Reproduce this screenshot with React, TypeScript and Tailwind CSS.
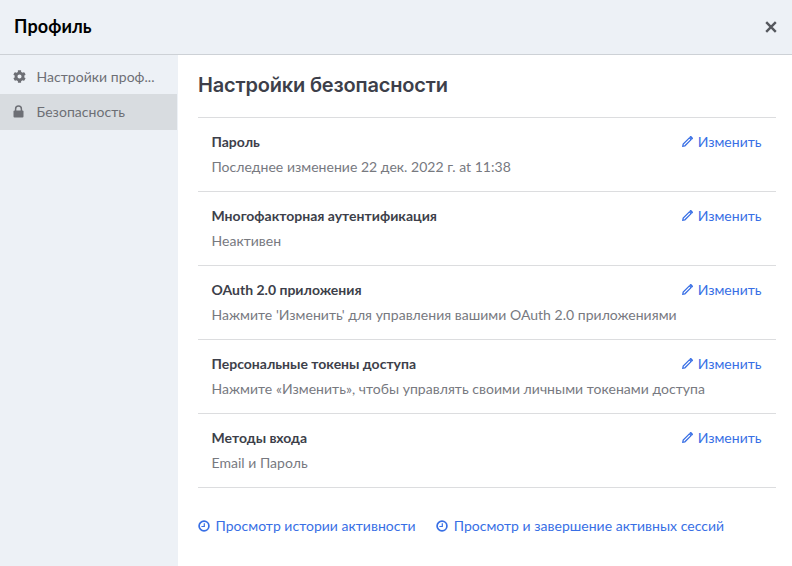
import { FaCog } from "react-icons/fa";

const rows = [
    { title: "Пароль", desc: "Последнее изменение 22 дек. 2022 г. at 11:38" },
    { title: "Многофакторная аутентификация", desc: "Неактивен" },
    { title: "OAuth 2.0 приложения", desc: "Нажмите 'Изменить' для управления вашими OAuth 2.0 приложениями" },
    { title: "Персональные токены доступа", desc: "Нажмите «Изменить», чтобы управлять своими личными токенами доступа" },
    { title: "Методы входа", desc: "Email и Пароль" },
];

function ClockIcon() {
    return (
        <svg width="12" height="12" viewBox="0 0 12 12" fill="none" stroke="currentColor" className="shrink-0">
            <circle cx="6" cy="6" r="4.9" strokeWidth="1.7" />
            <path d="M6.3 3.2V6.5H3.4" strokeWidth="1.2" />
        </svg>
    );
}

function PencilIcon() {
    return (
        <svg width="11" height="11" viewBox="0 0 11 11" fill="none" stroke="currentColor" strokeWidth="1.3" className="shrink-0">
            <path d="M7.4 1.9 1.2 8.1.8 10.2 2.9 9.8 9.1 3.6Z" />
            <path d="M8 1.3 8.8.6 10.4 2.2 9.7 3" fill="currentColor" />
        </svg>
    );
}

function LockIcon() {
    return (
        <svg width="11" height="13" viewBox="0 0 11 13" className="shrink-0">
            <path d="M2.6 6V4a2.9 2.9 0 0 1 5.8 0v2" fill="none" stroke="currentColor" strokeWidth="1.5" />
            <rect x="0.5" y="5.6" width="10" height="7" rx="1" fill="currentColor" />
        </svg>
    );
}

export default function App() {
    return (
        <div className="w-[792px] h-[566px] flex flex-col overflow-hidden bg-white font-['Lato','Noto_Sans',sans-serif]">
            {/* Header */}
            <div className="h-[55px] shrink-0 flex items-center justify-between pl-[14px] pr-[15px] pb-[1px] bg-[#edf1f6] border-b border-[#cdd1d6]">
                <h1 className="text-[18px] font-bold text-black tracking-[0.1px]">Профиль</h1>
                <svg width="12" height="12" viewBox="0 0 12 12" stroke="#55585e" strokeWidth="2.4">
                    <path d="M1.2 1.2 10.8 10.8M10.8 1.2 1.2 10.8" />
                </svg>
            </div>

            <div className="flex flex-1 min-h-0">
                {/* Sidebar */}
                <aside className="w-[178px] shrink-0 pt-1 bg-[#edf1f6] text-[14px] text-[#6d6f75] tracking-[0.04px]">
                    <div className="h-[35px] flex items-center gap-[10.5px] pl-[13px] pb-[1px]">
                        <FaCog size={13} className="shrink-0" />
                        <span className="whitespace-nowrap">Настройки проф...</span>
                    </div>
                    <div className="h-[36px] w-[177px] flex items-center gap-[12.5px] pl-[13px] pb-[1px] bg-[#d8dce0]">
                        <LockIcon />
                        <span>Безопасность</span>
                    </div>
                </aside>

                {/* Main */}
                <main className="flex-1 min-w-0 pl-5 pr-4">
                    <h2 className="h-[62px] pt-[16px] text-[20px] leading-[28px] font-semibold text-[#3d3f4a] font-['Inter',sans-serif] tracking-[-0.18px]">Настройки безопасности</h2>
                    <div className="border-t border-[#dcdddf]">
                        {rows.map((row) => (
                            <div key={row.title} className="h-[74px] px-[14px] pt-[14px] border-b border-[#dcdddf]">
                                <div className="flex justify-between items-center h-[18px]">
                                    <span className="text-[14px] font-bold text-[#3d3f4a] -ml-[0.5px]">{row.title}</span>
                                    <a className="flex items-center gap-[5px] text-[14px] text-[#386fe5] mr-[0.5px]">
                                        <PencilIcon />
                                        Изменить
                                    </a>
                                </div>
                                <p className="mt-[8px] text-[14px] leading-[18px] text-[#77797f] -ml-[0.5px] tracking-[0.025px]">{row.desc}</p>
                            </div>
                        ))}
                    </div>
                    <div className="flex gap-5 mt-[27px] text-[14px] text-[#386fe5] tracking-[0.02px]">
                        <a className="flex items-center gap-[6px] -ml-[0.5px]"><ClockIcon />Просмотр истории активности</a>
                        <a className="flex items-center gap-[6px]"><ClockIcon />Просмотр и завершение активных сессий</a>
                    </div>
                </main>
            </div>
        </div>
    );
}
